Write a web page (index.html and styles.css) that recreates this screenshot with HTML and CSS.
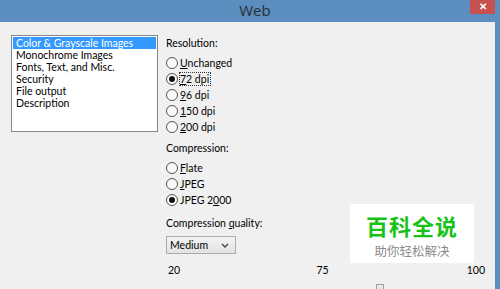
FILE: index.html
```html
<!DOCTYPE html>
<html lang="en">
<head>
    <meta charset="UTF-8">
    <title>Web</title>
    <link rel="stylesheet" href="styles.css">
</head>
<body>
    <div class="window">
        <div class="titlebar">
            <span class="title">Web</span>
            <span class="close-btn">&#x2715;</span>
        </div>
        <div class="content">
            <div class="listbox">
                <div class="list-item selected">Color &amp; Grayscale Images</div>
                <div class="list-item">Monochrome Images</div>
                <div class="list-item">Fonts, Text, and Misc.</div>
                <div class="list-item">Security</div>
                <div class="list-item">File output</div>
                <div class="list-item">Description</div>
            </div>

            <div class="settings">
                <div class="group-label">Resolution:</div>
                <div class="radio-group">
                    <div class="radio"><span class="circle"></span><span><u>U</u>nchanged</span></div>
                    <div class="radio"><span class="circle checked"></span><span class="focus"><u>7</u>2 dpi</span></div>
                    <div class="radio"><span class="circle"></span><span><u>9</u>6 dpi</span></div>
                    <div class="radio"><span class="circle"></span><span><u>1</u>50 dpi</span></div>
                    <div class="radio"><span class="circle"></span><span><u>2</u>00 dpi</span></div>
                </div>

                <div class="group-label spaced">Compression:</div>
                <div class="radio-group">
                    <div class="radio"><span class="circle"></span><span><u>F</u>late</span></div>
                    <div class="radio"><span class="circle"></span><span><u>J</u>PEG</span></div>
                    <div class="radio"><span class="circle checked"></span><span>JPEG 2<u>0</u>00</span></div>
                </div>

                <div class="group-label quality">Compression <u>q</u>uality:</div>
                <div class="select">
                    <span>Medium</span>
                    <svg width="8" height="5" viewBox="0 0 8 5"><path d="M1 1 L4 4 L7 1" fill="none" stroke="#444" stroke-width="1.3"/></svg>
                </div>

                <div class="slider-labels">
                    <span>20</span>
                    <span class="mid">75</span>
                    <span class="right">100</span>
                </div>
                <div class="slider-track">
                    <span class="thumb"></span>
                </div>
            </div>

            <div class="watermark">
                <div class="wm-main">百科全说</div>
                <div class="wm-sub">助你轻松解决</div>
            </div>
        </div>
    </div>
</body>
</html>
```

FILE: styles.css
```css
body {
    margin: 0;
    font-family: Lato, "Liberation Sans", sans-serif;
    font-size: 10.5px;
    color: #000;
}
.window {
    width: 500px;
    height: 289px;
    background: #5b8dbf;
    display: flex;
    flex-direction: column;
    overflow: hidden;
}
.titlebar {
    height: 22px;
    flex-shrink: 0;
    position: relative;
    display: flex;
    justify-content: center;
    align-items: center;
}
.title {
    font-family: "Open Sans", sans-serif;
    font-size: 15px;
    color: #2a2f36;
    margin-left: 10px;
    margin-top: -3px;
}
.close-btn {
    position: absolute;
    top: 0;
    right: 5px;
    width: 25px;
    height: 14px;
    background: #c75050;
    color: #fff;
    font-family: "Liberation Sans", sans-serif;
    font-size: 10px;
    font-weight: bold;
    line-height: 14px;
    text-align: center;
}
.content {
    flex: 1;
    min-height: 0;
    margin-right: 5px;
    background: #f0f0f0;
    display: flex;
    gap: 8px;
    padding: 13px 0 0 11px;
    position: relative;
}
.listbox {
    width: 143px;
    height: 93px;
    flex-shrink: 0;
    border: 1px solid #828790;
    background: #fff;
    padding: 1px;
}
.list-item {
    height: 12px;
    line-height: 12px;
    padding-left: 3px;
    white-space: nowrap;
}
.list-item.selected {
    background: #3399ff;
    color: #fff;
}
.settings {
    flex: 1;
    padding-top: 1px;
}
.group-label {
    height: 14px;
    line-height: 14px;
}
.group-label.spaced {
    margin-top: 6px;
}
.group-label.quality {
    margin-top: 8px;
}
.radio-group {
    margin-top: 5px;
}
.radio {
    height: 16px;
    display: flex;
    align-items: center;
    gap: 2px;
}
.circle {
    width: 10px;
    height: 10px;
    border: 1px solid #555;
    border-radius: 50%;
    background: linear-gradient(#f4f4f4, #ffffff);
    display: flex;
    align-items: center;
    justify-content: center;
}
.circle.checked::after {
    content: "";
    width: 6px;
    height: 6px;
    border-radius: 50%;
    background: #111;
}
.focus {
    outline: 1px dotted #333;
    padding-right: 1px;
}
.select {
    margin-top: 6px;
    width: 59px;
    height: 16px;
    border: 1px solid #acacac;
    background: linear-gradient(#f2f2f2, #e3e3e3);
    display: flex;
    align-items: center;
    justify-content: space-between;
    padding: 0 6px 0 3px;
}
.slider-labels {
    margin-top: 9px;
    width: 317px;
    display: grid;
    grid-template-columns: 1fr auto 1fr;
    padding-left: 2px;
    height: 14px;
    line-height: 14px;
}
.slider-labels .mid {
    margin-right: 8px;
}
.slider-labels .right {
    text-align: right;
}
.slider-track {
    margin-top: 7px;
    padding-left: 210px;
}
.thumb {
    display: block;
    width: 6px;
    height: 10px;
    border: 1px solid #a0a0a0;
    background: #e8e8e8;
}
.watermark {
    position: absolute;
    left: 350px;
    top: 182px;
    width: 124px;
    height: 59px;
    background: #fff;
    text-align: center;
    font-family: "Noto Sans CJK SC", sans-serif;
}
.wm-main {
    font-size: 22px;
    font-weight: bold;
    color: #19c219;
    line-height: 30px;
    margin-top: 6px;
    letter-spacing: 1px;
}
.wm-sub {
    font-size: 12.5px;
    color: #8a8a8a;
    line-height: 18px;
    margin-top: 2px;
}
```
